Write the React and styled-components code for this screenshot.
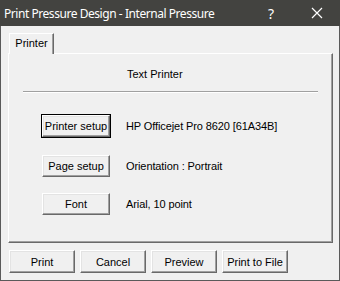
import React from 'react'
import styled, { createGlobalStyle, css } from 'styled-components'

const GlobalStyle = createGlobalStyle`
  html, body {
    margin: 0;
    padding: 0;
    background: #f0f0f0;
  }
  * { box-sizing: border-box; }
`

const Window = styled.div`
  width: 340px;
  height: 281px;
  display: flex;
  flex-direction: column;
  background: #f0f0f0;
  border: 1px solid #5a5a5a;
  border-top: none;
  font-family: 'Liberation Sans', Arial, sans-serif;
  font-size: 11px;
  color: #000;
`

const TitleBar = styled.div`
  height: 26px;
  flex: none;
  display: flex;
  align-items: center;
  background: #434340;
  color: #fff;
  margin: 0 -1px;
  padding-left: 4px;
`

const Title = styled.div`
  flex: 1;
  font-family: 'Noto Sans', 'Open Sans', sans-serif;
  font-size: 12px;
  letter-spacing: -0.45px;
  white-space: nowrap;
`

const TitleButton = styled.div`
  width: ${p => p.$w}px;
  height: 26px;
  display: flex;
  align-items: center;
  justify-content: center;
  font-family: 'Noto Sans', sans-serif;
  font-size: 14px;
  color: #fff;
`

const Body = styled.div`
  flex: 1;
  display: flex;
  flex-direction: column;
  padding: 7px 6px 0 7px;
`

const TabStrip = styled.div`
  display: flex;
  height: 20px;
  padding-left: 1px;
`

const Tab = styled.div`
  width: 45px;
  height: 21px;
  position: relative;
  z-index: 1;
  background: #f0f0f0;
  border-top: 1px solid #fff;
  border-left: 1px solid #fff;
  border-right: 1px solid #696969;
  box-shadow: inset -1px 0 #a0a0a0;
  display: flex;
  justify-content: center;
  padding-top: 3px;
`

const Panel = styled.div`
  height: 190px;
  border: 1px solid;
  border-color: #fff #696969 #696969 #fff;
  box-shadow: inset -1px -1px #a0a0a0;
  padding-top: 14px;
`

const Heading = styled.div`
  padding-left: 118px;
  height: 13px;
  line-height: 13px;
`

const Separator = styled.div`
  margin: 10px 14px 0 14px;
  border-top: 1px solid #a0a0a0;
  border-bottom: 1px solid #fff;
`

const Rows = styled.div`
  display: grid;
  grid-template-columns: 68px auto;
  grid-template-rows: 40px 38px 22px;
  column-gap: 16px;
  align-items: start;
  padding: 22px 0 0 33px;
`

const Button = styled.div`
  height: ${p => p.$h || 22}px;
  width: ${p => (p.$w ? `${p.$w}px` : 'auto')};
  display: flex;
  align-items: center;
  justify-content: center;
  background: #f0f0f0;
  border: 1px solid;
  border-color: #fff #696969 #696969 #fff;
  box-shadow: inset -1px -1px #a0a0a0, inset 1px 1px #e3e3e3;
  white-space: nowrap;
  ${p =>
    p.$focus &&
    css`
      outline: 1px solid #000;
    `}
`

const Value = styled.div`
  white-space: nowrap;
  line-height: 22px;
  letter-spacing: -0.1px;
`

const ButtonRow = styled.div`
  display: flex;
  gap: 5px;
  padding: 7px 0 0 1px;
`

const Close = () => (
  <svg width="12" height="12" viewBox="0 0 12 12">
    <path d="M1 1 L11 11 M11 1 L1 11" stroke="#fff" strokeWidth="1.2" />
  </svg>
)

const App = () => (
  <>
    <GlobalStyle />
    <Window>
      <TitleBar>
        <Title>Print Pressure Design - Internal Pressure</Title>
        <TitleButton $w={46}>?</TitleButton>
        <TitleButton $w={46}>
          <Close />
        </TitleButton>
      </TitleBar>
      <Body>
        <TabStrip>
          <Tab>Printer</Tab>
        </TabStrip>
        <Panel>
          <Heading>Text Printer</Heading>
          <Separator />
          <Rows>
            <Button $focus>Printer setup</Button>
            <Value>HP Officejet Pro 8620 [61A34B]</Value>
            <Button>Page setup</Button>
            <Value>Orientation : Portrait</Value>
            <Button>Font</Button>
            <Value>Arial, 10 point</Value>
          </Rows>
        </Panel>
        <ButtonRow>
          <Button $w={66} $h={23}>Print</Button>
          <Button $w={66} $h={23}>Cancel</Button>
          <Button $w={66} $h={23}>Preview</Button>
          <Button $w={66} $h={23}>Print to File</Button>
        </ButtonRow>
      </Body>
    </Window>
  </>
)

export default App
